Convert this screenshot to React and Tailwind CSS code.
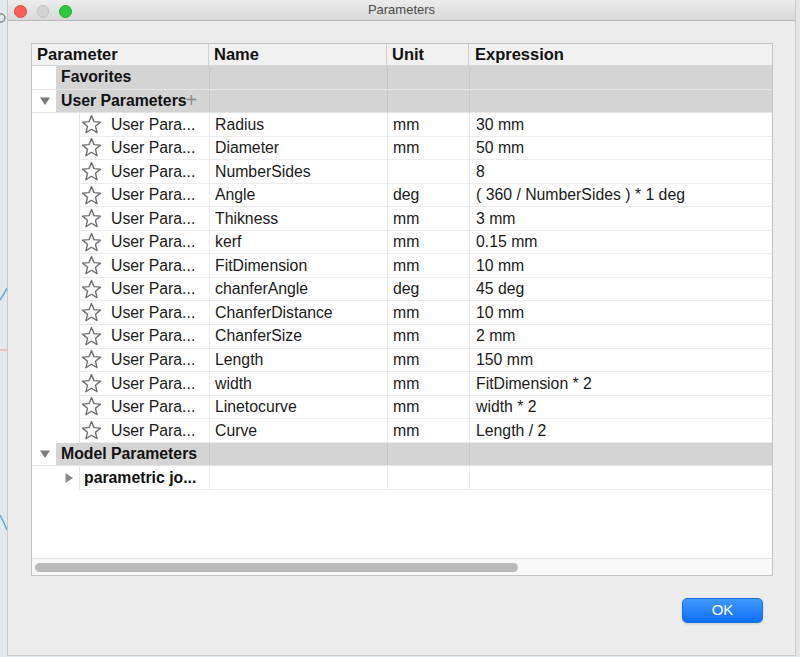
import React from 'react'

const PARAMS = [
  ['Radius', 'mm', '30 mm'],
  ['Diameter', 'mm', '50 mm'],
  ['NumberSides', '', '8'],
  ['Angle', 'deg', '( 360 / NumberSides ) * 1 deg'],
  ['Thikness', 'mm', '3 mm'],
  ['kerf', 'mm', '0.15 mm'],
  ['FitDimension', 'mm', '10 mm'],
  ['chanferAngle', 'deg', '45 deg'],
  ['ChanferDistance', 'mm', '10 mm'],
  ['ChanferSize', 'mm', '2 mm'],
  ['Length', 'mm', '150 mm'],
  ['width', 'mm', 'FitDimension * 2'],
  ['Linetocurve', 'mm', 'width * 2'],
  ['Curve', 'mm', 'Length / 2'],
]

function Star() {
  return (
    <svg width="21" height="21" viewBox="0 0 20 20" className="shrink-0">
      <polygon
        points="10,1.5 12.35,7.26 18.56,7.72 13.8,11.74 15.29,17.78 10,14.5 4.71,17.78 6.2,11.74 1.44,7.72 7.65,7.26"
        fill="none"
        stroke="#6e6e6e"
        strokeWidth="1.3"
        strokeLinejoin="round"
      />
    </svg>
  )
}

function Caret({ open }) {
  return (
    <svg width="10" height="10" viewBox="0 0 10 10">
      {open ? <polygon points="0,1.5 10,1.5 5,9" fill="#7a7a7a" /> : <polygon points="1.5,0 9,5 1.5,10" fill="#8a8a8a" />}
    </svg>
  )
}

function GroupRow({ label, plus }) {
  return (
    <div className="flex h-[23.55px] border-b border-[#e4e4e4]">
      <div className="w-[24px] flex items-center justify-center pl-[2px]">
        {label !== 'Favorites' && <Caret open />}
      </div>
      <div className="flex flex-1 bg-[#d4d4d4]">
        <div className="w-[153px] flex items-center pl-[5px] font-bold text-[#111]">
          {label}
          {plus && <span className="text-[#8a8a8a] font-normal text-[20px] leading-none -ml-[1px] -mt-[2px]">+</span>}
        </div>
        <div className="w-[178px] border-l border-[#c6c6c6]" />
        <div className="w-[82px] border-l border-[#c6c6c6]" />
        <div className="flex-1 border-l border-[#c6c6c6]" />
      </div>
    </div>
  )
}

function ParamRow({ name, unit, expr }) {
  return (
    <div className="flex h-[23.55px]">
      <div className="w-[47px]" />
      <div className="flex flex-1 border-b border-[#ececec]">
        <div className="w-[130px] flex items-center gap-[9px] pl-[1px] border-l border-[#e6e6e6] text-[#1a1a1a]">
          <Star />
          <span>User Para...</span>
        </div>
        <div className="w-[178px] flex items-center pl-[5px] border-l border-[#ececec]">{name}</div>
        <div className="w-[82px] flex items-center pl-[5px] border-l border-[#ececec]">{unit}</div>
        <div className="flex-1 flex items-center pl-[6px] border-l border-[#ececec]">{expr}</div>
      </div>
    </div>
  )
}

export default function App() {
  return (
    <div
      className="w-[800px] h-[657px] flex bg-[#e2e8ec] overflow-hidden text-[15.8px] text-[#1a1a1a]"
      style={{ fontFamily: '"Liberation Sans", Arial, sans-serif' }}
    >
      {/* desktop behind the dialog */}
      <div className="w-[7px] shrink-0 relative">
        <svg width="7" height="657" className="absolute inset-0">
          <circle cx="1" cy="18" r="4" fill="none" stroke="#8a8a8a" strokeWidth="1.5" />
          <path d="M0 300 Q4 294 7 288" stroke="#5aa9d6" strokeWidth="1.5" fill="none" />
          <line x1="0" y1="350" x2="7" y2="350" stroke="#e9a0a0" strokeWidth="1" />
          <path d="M0 515 Q4 522 7 530" stroke="#5aa9d6" strokeWidth="1.5" fill="none" />
        </svg>
      </div>

      <div className="w-[789px] h-[656px] shrink-0 flex flex-col bg-[#ececec] border-x border-b border-[#c9c9c9]">
        {/* title bar */}
        <div className="h-[21px] shrink-0 relative flex items-center justify-center bg-gradient-to-b from-[#ececec] to-[#d8d8d8] border-b border-[#b9b9b9]">
          <div className="absolute left-[6px] top-[5px] flex gap-[10px]">
            <div className="w-[12.5px] h-[12.5px] rounded-full bg-[#fc5f57] border border-[#e0443e]" />
            <div className="w-[12.5px] h-[12.5px] rounded-full bg-[#d3d3d3] border border-[#c4c4c4]" />
            <div className="w-[12.5px] h-[12.5px] rounded-full bg-[#2bc840] border border-[#1aab29]" />
          </div>
          <span className="text-[13px] text-[#4a4a4a]">Parameters</span>
        </div>

        {/* table */}
        <div className="ml-[23px] mt-[22px] w-[742px] h-[533px] flex flex-col bg-white border border-[#c4c4c4]">
          <div className="flex h-[22px] shrink-0 bg-[#f1f1f1] border-b border-[#d6d6d6] font-bold text-[16.5px] text-[#111]">
            <div className="w-[176px] flex items-center pl-[5px]">Parameter</div>
            <div className="w-[178px] flex items-center pl-[5px] border-l border-[#cfcfcf]">Name</div>
            <div className="w-[82px] flex items-center pl-[5px] border-l border-[#cfcfcf]">Unit</div>
            <div className="flex-1 flex items-center pl-[6px] border-l border-[#cfcfcf]">Expression</div>
          </div>

          <div className="flex-1 flex flex-col">
            <GroupRow label="Favorites" />
            <GroupRow label="User Parameters" plus />
            {PARAMS.map(([n, u, e]) => (
              <ParamRow key={n} name={n} unit={u} expr={e} />
            ))}
            <GroupRow label="Model Parameters" />
            <div className="flex h-[23.55px]">
              <div className="w-[47px] flex items-center pl-[32px]">
                <Caret />
              </div>
              <div className="flex flex-1 border-b border-[#ececec]">
                <div className="w-[130px] flex items-center pl-[4px] border-l border-[#e6e6e6] font-bold text-[#111]">parametric jo...</div>
                <div className="w-[178px] border-l border-[#ececec]" />
                <div className="w-[82px] border-l border-[#ececec]" />
                <div className="flex-1 border-l border-[#ececec]" />
              </div>
            </div>
          </div>

          {/* horizontal scroller */}
          <div className="h-[17px] shrink-0 flex items-center px-[3px] bg-[#f8f8f8] border-t border-[#e3e3e3]">
            <div className="w-[483px] h-[9px] rounded-full bg-[#bababa]" />
          </div>
        </div>

        <div className="flex justify-end mt-[22px] mr-[32px]">
          <button className="w-[81px] h-[25px] rounded-[5px] bg-gradient-to-b from-[#3f9bff] to-[#0a6ef5] border border-[#1c6fdc] text-white text-[15px] shadow-sm">
            OK
          </button>
        </div>
      </div>

      <div className="flex-1 bg-[#e6e6e6]" />
    </div>
  )
}
